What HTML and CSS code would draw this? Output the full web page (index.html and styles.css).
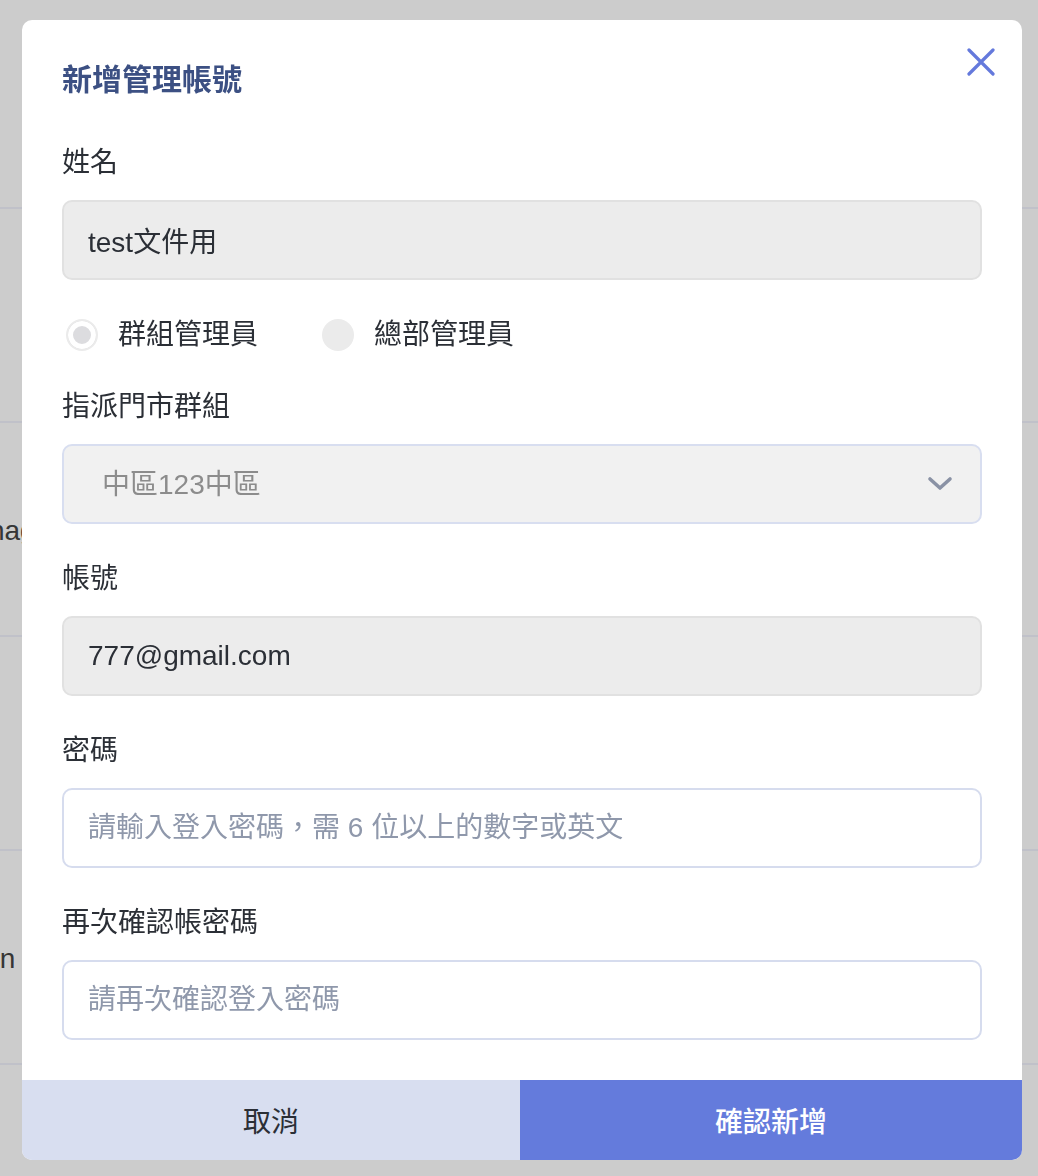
FILE: index.html
```html
<!DOCTYPE html>
<html lang="zh-Hant">
<head>
  <meta charset="UTF-8" />
  <meta name="viewport" content="width=device-width, initial-scale=1.0" />
  <title>新增管理帳號</title>
  <link rel="stylesheet" href="styles.css">
</head>
<body>
  <div class="backdrop-table">
    <div class="row first"></div>
    <div class="row"></div>
    <div class="row"><span class="cell-text one">Manager</span></div>
    <div class="row"></div>
    <div class="row"><span class="cell-text two">Admin</span></div>
    <div class="row last"></div>
  </div>

  <div class="overlay">
    <div class="modal">
      <button class="close" aria-label="關閉">
        <svg width="28" height="28" viewBox="0 0 28 28">
          <path d="M2 2 L26 26 M26 2 L2 26" stroke="#6479dc" stroke-width="3.2" stroke-linecap="round" fill="none"/>
        </svg>
      </button>

      <div class="modal-body">
        <h2 class="title">新增管理帳號</h2>

        <div class="field">
          <label>姓名</label>
          <input type="text" class="input filled" value="test文件用" readonly />
        </div>

        <div class="radios">
          <label class="radio">
            <span class="dot checked"></span>
            群組管理員
          </label>
          <label class="radio">
            <span class="dot"></span>
            總部管理員
          </label>
        </div>

        <div class="field">
          <label>指派門市群組</label>
          <div class="select-wrap">
            <select class="select" disabled>
              <option>中區123中區</option>
            </select>
            <svg class="chevron" width="26" height="16" viewBox="0 0 26 16">
              <path d="M3 3 L13 12 L23 3" stroke="#8a92a5" stroke-width="3.6" stroke-linecap="round" stroke-linejoin="round" fill="none"/>
            </svg>
          </div>
        </div>

        <div class="field">
          <label>帳號</label>
          <input type="text" class="input filled" value="777@gmail.com" readonly />
        </div>

        <div class="field">
          <label>密碼</label>
          <input type="password" class="input" placeholder="請輸入登入密碼，需 6 位以上的數字或英文" />
        </div>

        <div class="field">
          <label>再次確認帳密碼</label>
          <input type="password" class="input" placeholder="請再次確認登入密碼" />
        </div>
      </div>

      <div class="modal-footer">
        <button class="btn cancel">取消</button>
        <button class="btn confirm">確認新增</button>
      </div>
    </div>
  </div>
</body>
</html>
```

FILE: styles.css
```css
html, body {
  height: 100%;
}
body {
  margin: 0;
  background: #cccccc;
  font-family: "Liberation Sans", "Noto Sans CJK TC", sans-serif;
  color: #2b2f36;
  overflow: hidden;
}
.backdrop-table {
  width: 100%;
}
.row {
  height: 212px;
  border-bottom: 2px solid #c0c1c9;
  display: flex;
  align-items: center;
  overflow: hidden;
}
.row.first {
  height: 207px;
}
.row.last {
  height: 111px;
  border-bottom: none;
}
.cell-text {
  font-size: 28px;
  color: #363636;
  white-space: nowrap;
  padding-top: 4px;
}
.cell-text.one {
  margin-left: -50px;
}
.cell-text.two {
  margin-left: -64px;
}

.overlay {
  position: fixed;
  inset: 0;
  display: flex;
  align-items: flex-start;
  padding: 20px 16px 16px 22px;
}
.modal {
  position: relative;
  width: 1000px;
  background: #ffffff;
  border-radius: 10px;
  overflow: hidden;
}
.close {
  position: absolute;
  top: 28px;
  right: 27px;
  width: 28px;
  height: 28px;
  padding: 0;
  border: none;
  background: none;
  cursor: pointer;
}
.close svg {
  display: block;
}
.modal-body {
  padding: 40px 40px 40px;
}
.title {
  margin: 0 0 40px;
  font-size: 30px;
  line-height: 40px;
  font-weight: 700;
  color: #3c5083;
}
.field {
  display: flex;
  flex-direction: column;
  gap: 17px;
}
.field + .field {
  margin-top: 32px;
}
.radios + .field {
  margin-top: 29px;
}
.field label {
  font-size: 28px;
  line-height: 40px;
  padding-top: 3px;
  color: #2b2f36;
}
.input,
.select {
  box-sizing: border-box;
  width: 100%;
  height: 80px;
  border: 2px solid #d6dcee;
  border-radius: 10px;
  background: #ffffff;
  font: inherit;
  font-size: 28px;
  color: #2b2f36;
  padding: 0 24px;
  outline: none;
}
.input::placeholder {
  color: #8f98ab;
}
.input.filled {
  background: #ececec;
  border-color: #e1e1e1;
}
.select-wrap {
  position: relative;
}
.select {
  appearance: none;
  -webkit-appearance: none;
  background: #f1f1f1;
  border-color: #d8def0;
  color: #8c8c8c;
  padding-left: 38px;
  opacity: 1;
}
.chevron {
  position: absolute;
  right: 29px;
  top: 32px;
  pointer-events: none;
}

.radios {
  display: flex;
  align-items: center;
  gap: 64px;
  margin-top: 35px;
  padding-left: 4px;
  height: 40px;
}
.radio {
  display: flex;
  align-items: center;
  gap: 20px;
  font-size: 28px;
  line-height: 40px;
  color: #2b2f36;
}
.dot {
  box-sizing: border-box;
  width: 32px;
  height: 32px;
  border-radius: 50%;
  background: #ebebeb;
}
.dot.checked {
  background: #dcdcdf;
  border: 2px solid #ebebeb;
  box-shadow: inset 0 0 0 5px #ffffff;
}

.modal-footer {
  display: flex;
}
.btn {
  height: 80px;
  border: none;
  font: inherit;
  font-size: 28px;
  cursor: pointer;
}
.btn.cancel {
  flex: 0 0 498px;
  background: #d8def0;
  color: #2b2f36;
}
.btn.confirm {
  flex: 1;
  background: #647bdc;
  color: #ffffff;
  font-weight: 500;
}
```
